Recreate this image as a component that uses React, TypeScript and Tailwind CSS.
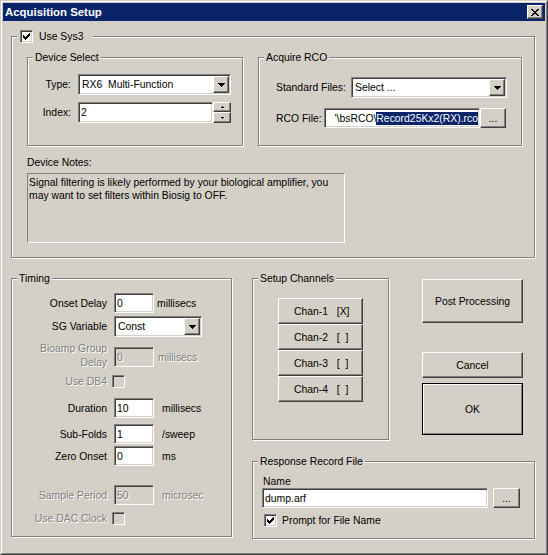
import type { ReactNode } from 'react';

const raised =
  'border border-t-white border-l-white border-r-[#404040] border-b-[#404040] shadow-[inset_-1px_-1px_0_#808080] bg-[#d4d0c8]';
const sunken =
  'border border-t-[#808080] border-l-[#808080] border-r-white border-b-white shadow-[inset_1px_1px_0_#404040,inset_-1px_-1px_0_#d4d0c8] p-px';
const grayText = 'text-[#808080] [text-shadow:1px_1px_0_#fff]';

function Group({ title, className, children }: { title: ReactNode; className: string; children?: ReactNode }) {
  return (
    <div className={`relative border border-[#808080] shadow-[inset_1px_1px_0_#fff,1px_1px_0_#fff] ${className}`}>
      <div className="absolute left-[5px] -top-[7px] bg-[#d4d0c8] px-[2px] leading-[13px] whitespace-nowrap">{title}</div>
      {children}
    </div>
  );
}

function Check({ checked, disabled }: { checked?: boolean; disabled?: boolean }) {
  return (
    <div className={`relative w-[13px] h-[13px] shrink-0 ${sunken} ${disabled ? 'bg-[#d4d0c8]' : 'bg-white'}`}>
      {checked && (
        <svg className="absolute left-[2px] top-[2px]" width="7" height="7" viewBox="0 0 7 7" shapeRendering="crispEdges">
          <path d="M0 2h1v3H0zM1 3h1v3H1zM2 4h1v3H2zM3 3h1v3H3zM4 2h1v3H4zM5 1h1v3H5zM6 0h1v3H6z" fill="#000" />
        </svg>
      )}
    </div>
  );
}

function Field({ value, className, disabled }: { value: string; className: string; disabled?: boolean }) {
  return (
    <div className={`${sunken} flex items-center ${disabled ? 'bg-[#d4d0c8]' : 'bg-white'} ${className}`}>
      <span className={`pl-[1px] whitespace-pre ${disabled ? grayText : ''}`}>{value}</span>
    </div>
  );
}

function DownArrow() {
  return (
    <svg width="7" height="4" viewBox="0 0 7 4" shapeRendering="crispEdges">
      <path d="M0 0h7v1H0zM1 1h5v1H1zM2 2h3v1H2zM3 3h1v1H3z" fill="#000" />
    </svg>
  );
}

function Combo({ value, className }: { value: string; className: string }) {
  return (
    <div className={`${sunken} bg-white h-[21px] flex items-center ${className}`}>
      <span className="flex-1 pl-[2px] whitespace-pre">{value}</span>
      <div className={`${raised} w-[16px] h-[17px] flex items-center justify-center`}>
        <DownArrow />
      </div>
    </div>
  );
}

function Btn({ children, className }: { children: ReactNode; className: string }) {
  return <div className={`${raised} flex items-center justify-center whitespace-pre ${className}`}>{children}</div>;
}

function TimingRow({
  label,
  value,
  unit,
  className,
  unitClass,
  disabled,
}: {
  label: ReactNode;
  value: string;
  unit: string;
  className: string;
  unitClass: string;
  disabled?: boolean;
}) {
  return (
    <div className={`flex items-center h-[20px] ${className}`}>
      <span className={`w-[95px] text-right ${disabled ? grayText : ''}`}>{label}</span>
      <Field className="ml-[7px] w-[40px] h-[20px]" value={value} disabled={disabled} />
      <span className={`${unitClass} ${disabled ? grayText : ''}`}>{unit}</span>
    </div>
  );
}

const channels = ['Chan-1   [X]', 'Chan-2   [  ]', 'Chan-3   [  ]', 'Chan-4   [  ]'];

export default function App() {
  return (
    <div className="w-[548px] h-[555px] bg-[#d4d0c8] border border-t-[#d4d0c8] border-l-[#d4d0c8] border-r-[#404040] border-b-[#404040] [font-family:'Liberation_Sans',Arial,sans-serif] text-[10.4px] leading-[13px] text-black select-none">
      <div className="h-full border border-t-white border-l-white border-r-[#808080] border-b-[#808080] p-px flex flex-col">
        {/* title bar */}
        <div className="h-[18px] shrink-0 bg-[#0a246a] flex items-center justify-between px-[2px]">
          <span className="text-white font-bold text-[11.4px]">Acquisition Setup</span>
          <div className={`${raised} w-[16px] h-[14px] flex items-center justify-center`}>
            <svg width="8" height="7" viewBox="0 0 8 7" shapeRendering="crispEdges">
              <path
                d="M0 0h2v1H0zM6 0h2v1H6zM1 1h2v1H1zM5 1h2v1H5zM2 2h4v1H2zM3 3h2v1H3zM2 4h4v1H2zM1 5h2v1H1zM5 5h2v1H5zM0 6h2v1H0zM6 6h2v1H6z"
                fill="#000"
              />
            </svg>
          </div>
        </div>

        <div className="flex-1 flex flex-col">
          {/* Use Sys3 */}
          <Group
            className="ml-[8px] mt-[15px] w-[524px] h-[222px]"
            title={
              <div className="flex items-center pl-[1px] pr-[8px]">
                <Check checked />
                <span className="ml-[6px]">Use Sys3</span>
              </div>
            }
          >
            <div className="flex mt-[20px] ml-[15px] gap-[15px]">
              <Group title="Device Select" className="w-[216px] h-[89px]">
                <div className="flex items-center mt-[16px]">
                  <span className="w-[43px] text-right">Type:</span>
                  <Combo className="ml-[7px] w-[153px]" value="RX6  Multi-Function" />
                </div>
                <div className="flex items-center mt-[7px]">
                  <span className="w-[43px] text-right">Index:</span>
                  <Field className="ml-[7px] w-[135px] h-[21px]" value="2" />
                  <div className="w-[18px] h-[21px] flex flex-col">
                    <div className={`${raised} h-[10px] flex items-center justify-center`}>
                      <svg width="3" height="2" viewBox="0 0 3 2" shapeRendering="crispEdges">
                        <path d="M1 0h1v1H1zM0 1h3v1H0z" fill="#000" />
                      </svg>
                    </div>
                    <div className={`${raised} h-[11px] flex items-center justify-center`}>
                      <svg width="3" height="2" viewBox="0 0 3 2" shapeRendering="crispEdges">
                        <path d="M0 0h3v1H0zM1 1h1v1H1z" fill="#000" />
                      </svg>
                    </div>
                  </div>
                </div>
              </Group>

              <Group title="Acquire RCO" className="w-[264px] h-[89px]">
                <div className="flex items-center mt-[19px] ml-[17px]">
                  <span className="w-[75px]">Standard Files:</span>
                  <Combo className="w-[156px]" value="Select ..." />
                </div>
                <div className="flex items-center mt-[10px] ml-[17px]">
                  <span className="w-[48px]">RCO File:</span>
                  <div className={`${sunken} bg-white w-[156px] h-[20px] overflow-hidden flex items-center justify-end`}>
                    <span className="whitespace-pre">{"'\\bsRCO\\"}</span>
                    <span className="whitespace-pre bg-[#0a246a] text-white">Record25Kx2(RX).rco</span>
                  </div>
                  <Btn className="w-[26px] h-[20px]">...</Btn>
                </div>
              </Group>
            </div>

            <div className="ml-[15px] mt-[10px]">Device Notes:</div>
            <div className="ml-[15px] mt-[4px] w-[318px] h-[70px] border border-t-[#808080] border-l-[#808080] border-r-white border-b-white pl-px pt-[2px]">
              Signal filtering is likely performed by your biological amplifier, you
              <br />
              may want to set filters within Biosig to OFF.
            </div>
          </Group>

          <div className="flex mt-[20px]">
            {/* Timing */}
            <Group title="Timing" className="ml-[8px] w-[221px] h-[259px]">
              <TimingRow className="mt-[14px]" label="Onset Delay" value="0" unit="millisecs" unitClass="ml-[3px]" />
              <div className="flex items-center mt-[3px] h-[21px]">
                <span className="w-[95px] text-right">SG Variable</span>
                <Combo className="ml-[7px] w-[88px]" value="Const" />
              </div>
              <TimingRow
                className="mt-[10px]"
                label={
                  <span className="block leading-[14px] -mt-[3px]">
                    Bioamp Group
                    <br />
                    Delay
                  </span>
                }
                value="0"
                unit="millisecs"
                unitClass="ml-[4px]"
                disabled
              />
              <div className="flex items-center mt-[8px] h-[13px]">
                <span className={`w-[95px] text-right ${grayText}`}>Use DB4</span>
                <div className="ml-[5px]">
                  <Check disabled />
                </div>
              </div>
              <TimingRow className="mt-[10px]" label="Duration" value="10" unit="millisecs" unitClass="ml-[8px]" />
              <TimingRow className="mt-[6px]" label="Sub-Folds" value="1" unit="/sweep" unitClass="ml-[8px]" />
              <TimingRow className="mt-[2px]" label="Zero Onset" value="0" unit="ms" unitClass="ml-[8px]" />
              <TimingRow
                className="mt-[19px]"
                label="Sample Period"
                value="50"
                unit="microsec"
                unitClass="ml-[8px]"
                disabled
              />
              <div className="flex items-center mt-[7px] h-[13px]">
                <span className={`w-[95px] text-right ${grayText}`}>Use DAC Clock</span>
                <div className="ml-[5px]">
                  <Check disabled />
                </div>
              </div>
            </Group>

            <div className="ml-[20px] w-[283px]">
              <div className="flex">
                <Group title="Setup Channels" className="w-[137px] h-[162px]">
                  <div className="mt-[19px] ml-[25px] w-[85px] flex flex-col">
                    {channels.map((c) => (
                      <div key={c} className={`${raised} h-[26px] flex items-center pl-[15px] whitespace-pre`}>
                        {c}
                      </div>
                    ))}
                  </div>
                </Group>

                <div className="ml-[33px] mt-[1px] w-[101px] flex flex-col">
                  <Btn className="h-[44px]">Post Processing</Btn>
                  <Btn className="h-[26px] mt-[29px]">Cancel</Btn>
                  <div className="mt-[5px] h-[52px] border border-black">
                    <div className="h-full border border-t-white border-l-white border-r-[#808080] border-b-[#808080] flex items-center justify-center">
                      OK
                    </div>
                  </div>
                </div>
              </div>

              <Group title="Response Record File" className="mt-[21px] w-[283px] h-[78px]">
                <div className="ml-[10px] mt-[13px]">Name</div>
                <div className="flex ml-[9px]">
                  <Field className="w-[226px] h-[20px]" value="dump.arf" />
                  <Btn className="ml-[5px] w-[27px] h-[20px]">...</Btn>
                </div>
                <div className="flex items-center mt-[6px] ml-[11px]">
                  <Check checked />
                  <span className="ml-[5px]">Prompt for File Name</span>
                </div>
              </Group>
            </div>
          </div>
        </div>
      </div>
    </div>
  );
}
